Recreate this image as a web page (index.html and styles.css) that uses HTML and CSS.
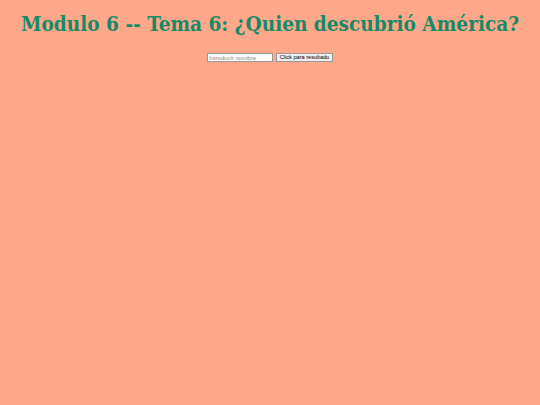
FILE: index.html
```html
<!DOCTYPE html>
<html lang="es">
<head>
<meta charset="utf-8">
<title>Modulo 6</title>
<link rel="stylesheet" href="styles.css">
</head>
<body>
<h1 class="title">Modulo 6 -- Tema 6: ¿Quien descubrió América?</h1>
<div class="form">
<input class="name" type="text" placeholder="Introducir nombre">
<button class="btn">Click para resultado</button>
</div>
</body>
</html>
```
FILE: styles.css
```css
html, body {
  margin: 0;
  padding: 0;
  background: #ffa78a;
}
body {
  padding-top: 10px;
}
.title {
  margin: 0;
  text-align: center;
  font-family: "DejaVu Serif", serif;
  font-stretch: condensed;
  font-weight: bold;
  font-size: 20.6px;
  color: #168a66;
  line-height: 28px;
  white-space: nowrap;
}
.form {
  display: flex;
  justify-content: center;
  align-items: center;
  gap: 3px;
  margin-top: 15px;
}
.name {
  box-sizing: border-box;
  width: 66px;
  height: 9px;
  padding: 0 1px;
  border: 1px solid #999;
  font-family: "Liberation Sans", sans-serif;
  font-size: 6px;
  background: #fff;
}
.name::placeholder {
  color: #888;
}
.btn {
  box-sizing: border-box;
  width: 57px;
  height: 9px;
  padding: 0;
  border: 1px solid #999;
  background: #eee;
  font-family: "Liberation Sans", sans-serif;
  font-size: 5.6px;
  line-height: 7px;
  color: #000;
  white-space: nowrap;
}
```
